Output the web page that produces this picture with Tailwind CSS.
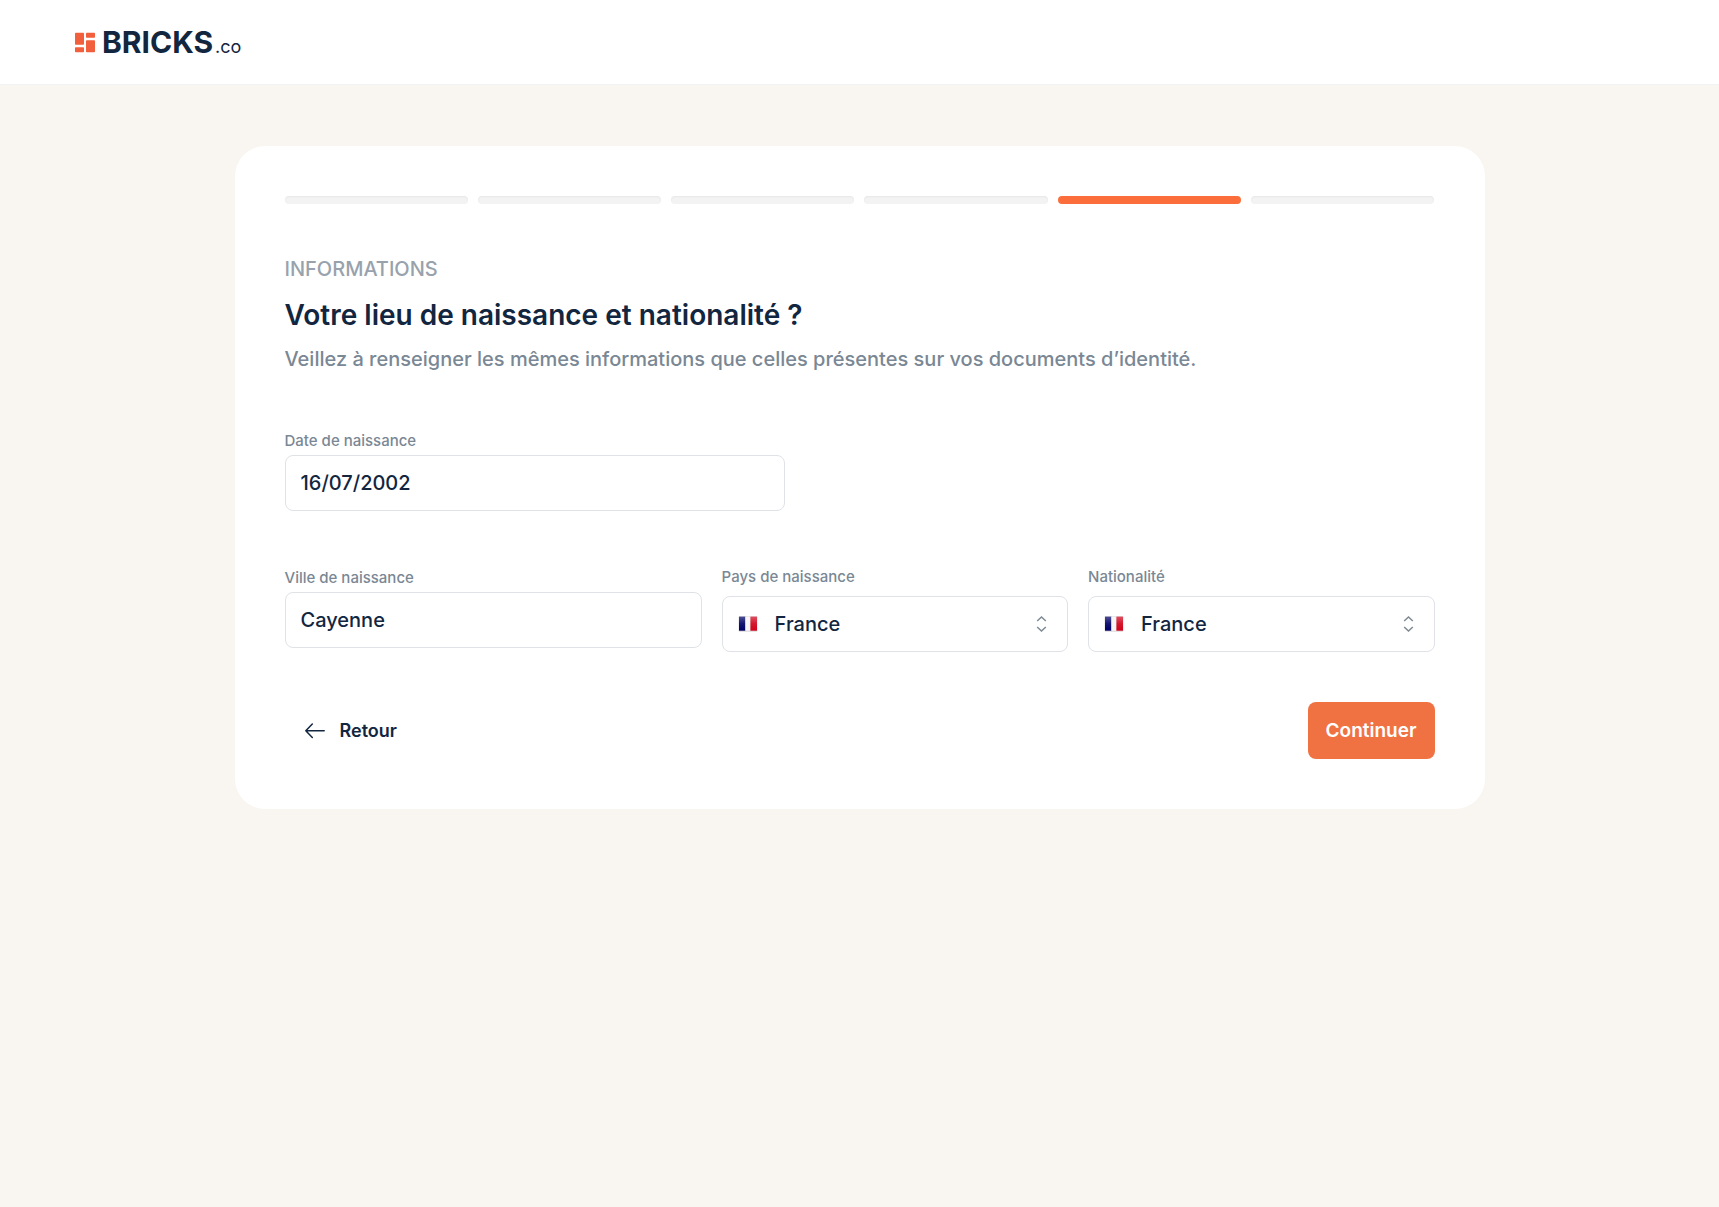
<!DOCTYPE html>
<html lang="fr">
<head>
<meta charset="utf-8">
<meta name="viewport" content="width=device-width, initial-scale=1">
<title>Bricks.co – Informations</title>
<script src="https://cdn.jsdelivr.net/npm/@tailwindcss/browser@4"></script>
</head>
<body class="min-h-screen bg-[#f9f5f0] font-['Inter',sans-serif] font-medium text-[#12263f]">
<header class="flex h-[85px] items-center border-b border-[#f1f3f7] bg-white px-6 pt-px md:px-[75px]">
  <a href="#" class="flex items-center gap-[7px]" aria-label="Bricks.co">
    <svg class="h-[21px] w-5" viewBox="0 0 20 21" fill="#f15f3d" aria-hidden="true">
      <rect x="0" y="0.7" width="9" height="12" rx="0.7"/>
      <rect x="0" y="15.3" width="9" height="5" rx="0.7"/>
      <rect x="11" y="0.7" width="9" height="5" rx="0.7"/>
      <rect x="11" y="8.3" width="9" height="12" rx="0.7"/>
    </svg>
    <span class="flex items-baseline gap-0.5 pb-0.5 leading-none"><span class="text-[30px] leading-none font-bold">BRICKS</span><span class="text-lg leading-none font-normal">.co</span></span>
  </a>
</header>
<main class="px-4 pt-[61px] pb-16">
  <form class="mx-auto max-w-[1250px] rounded-[30px] bg-white p-[50px]">
    <div class="grid grid-cols-6 gap-2.5" role="progressbar" aria-label="Étape" aria-valuemin="1" aria-valuemax="6" aria-valuenow="5">
      <span class="h-2 rounded bg-[#f3f3f3] shadow-[inset_0_1px_2px_#0000000d]"></span>
      <span class="h-2 rounded bg-[#f3f3f3] shadow-[inset_0_1px_2px_#0000000d]"></span>
      <span class="h-2 rounded bg-[#f3f3f3] shadow-[inset_0_1px_2px_#0000000d]"></span>
      <span class="h-2 rounded bg-[#f3f3f3] shadow-[inset_0_1px_2px_#0000000d]"></span>
      <span class="h-2 rounded bg-[#fb6d3a]"></span>
      <span class="h-2 rounded bg-[#f3f3f3] shadow-[inset_0_1px_2px_#0000000d]"></span>
    </div>
    <p class="mt-[50px] text-xl leading-[30px] text-[#98a2ad]">INFORMATIONS</p>
    <h1 class="mt-2 text-[28px] leading-[46px] font-semibold">Votre lieu de naissance et nationalité ?</h1>
    <p class="mt-1.5 text-xl leading-[30px] text-[#7a8794]">Veillez à renseigner les mêmes informations que celles présentes sur vos documents d’identité.</p>

    <div class="mt-[55px] flex max-w-[500px] flex-col gap-0.5">
      <label for="birthdate" class="text-[15px] leading-6 text-[#7a8794]">Date de naissance</label>
      <input id="birthdate" type="text" value="16/07/2002" class="h-14 w-full rounded-lg border border-[#dfe2e6] px-[15px] text-xl">
    </div>

    <div class="mt-[54px] grid gap-5 md:grid-cols-[1.204fr_1fr_1fr]">
      <div class="flex flex-col gap-0.5 pt-px">
        <label for="city" class="text-[15px] leading-6 text-[#7a8794]">Ville de naissance</label>
        <input id="city" type="text" value="Cayenne" class="h-14 w-full rounded-lg border border-[#dfe2e6] px-[15px] text-xl">
      </div>
      <div class="flex flex-col gap-[7px]">
        <label for="country" class="text-[15px] leading-6 text-[#7a8794]">Pays de naissance</label>
        <div class="relative">
          <select id="country" class="h-14 w-full appearance-none rounded-lg border border-[#dfe2e6] bg-white pr-12 pl-[52px] text-xl"><option>France</option></select>
          <svg class="pointer-events-none absolute top-5 left-4 h-4 w-5" viewBox="0 0 20 16" aria-hidden="true">
            <defs><linearGradient id="sheen" x1="0" y1="0" x2="0" y2="1"><stop offset="0" stop-color="#fff" stop-opacity=".3"/><stop offset=".5" stop-color="#fff" stop-opacity=".08"/><stop offset="1" stop-color="#fff" stop-opacity="0"/></linearGradient></defs>
            <rect x="0.6" y="0.2" width="18.8" height="15.6" rx="1" fill="#dcd9d9"/>
            <rect x="1" y="0.7" width="6.4" height="14" fill="#000066"/><rect x="7.4" y="0.7" width="5" height="14" fill="#f6f4f5"/><rect x="12.4" y="0.7" width="6.6" height="14" fill="#d0021b"/>
            <rect x="1" y="0.7" width="18" height="14" fill="url(#sheen)"/>
          </svg>
          <svg class="pointer-events-none absolute top-5 right-5 h-4 w-3" viewBox="0 0 12 16" fill="none" stroke="#7f8a95" stroke-width="1.5" aria-hidden="true"><path d="M1.2 5 5.5 1l4.3 4M1.2 11l4.3 4 4.3-4"/></svg>
        </div>
      </div>
      <div class="flex flex-col gap-[7px]">
        <label for="nationality" class="text-[15px] leading-6 text-[#7a8794]">Nationalité</label>
        <div class="relative">
          <select id="nationality" class="h-14 w-full appearance-none rounded-lg border border-[#dfe2e6] bg-white pr-12 pl-[52px] text-xl"><option>France</option></select>
          <svg class="pointer-events-none absolute top-5 left-4 h-4 w-5" viewBox="0 0 20 16" aria-hidden="true">
            <rect x="0.6" y="0.2" width="18.8" height="15.6" rx="1" fill="#dcd9d9"/>
            <rect x="1" y="0.7" width="6.4" height="14" fill="#000066"/><rect x="7.4" y="0.7" width="5" height="14" fill="#f6f4f5"/><rect x="12.4" y="0.7" width="6.6" height="14" fill="#d0021b"/>
            <rect x="1" y="0.7" width="18" height="14" fill="url(#sheen)"/>
          </svg>
          <svg class="pointer-events-none absolute top-5 right-5 h-4 w-3" viewBox="0 0 12 16" fill="none" stroke="#7f8a95" stroke-width="1.5" aria-hidden="true"><path d="M1.2 5 5.5 1l4.3 4M1.2 11l4.3 4 4.3-4"/></svg>
        </div>
      </div>
    </div>

    <div class="mt-[50px] flex items-center justify-between">
      <button type="button" class="flex items-center gap-[15px] pl-5 text-lg font-semibold">
        <svg class="h-4 w-5" viewBox="0 0 20 16" fill="none" stroke="currentColor" stroke-width="1.5" stroke-linecap="round" stroke-linejoin="round" aria-hidden="true"><path d="M7.3 1 .8 7.8l6.5 6.7M.8 7.8h18.4"/></svg>
        Retour
      </button>
      <button type="submit" class="h-[57px] rounded-lg bg-[#f07243] px-[18px] pt-0.5 text-[19px] font-semibold text-white">Continuer</button>
    </div>
  </form>
</main>
</body>
</html>
